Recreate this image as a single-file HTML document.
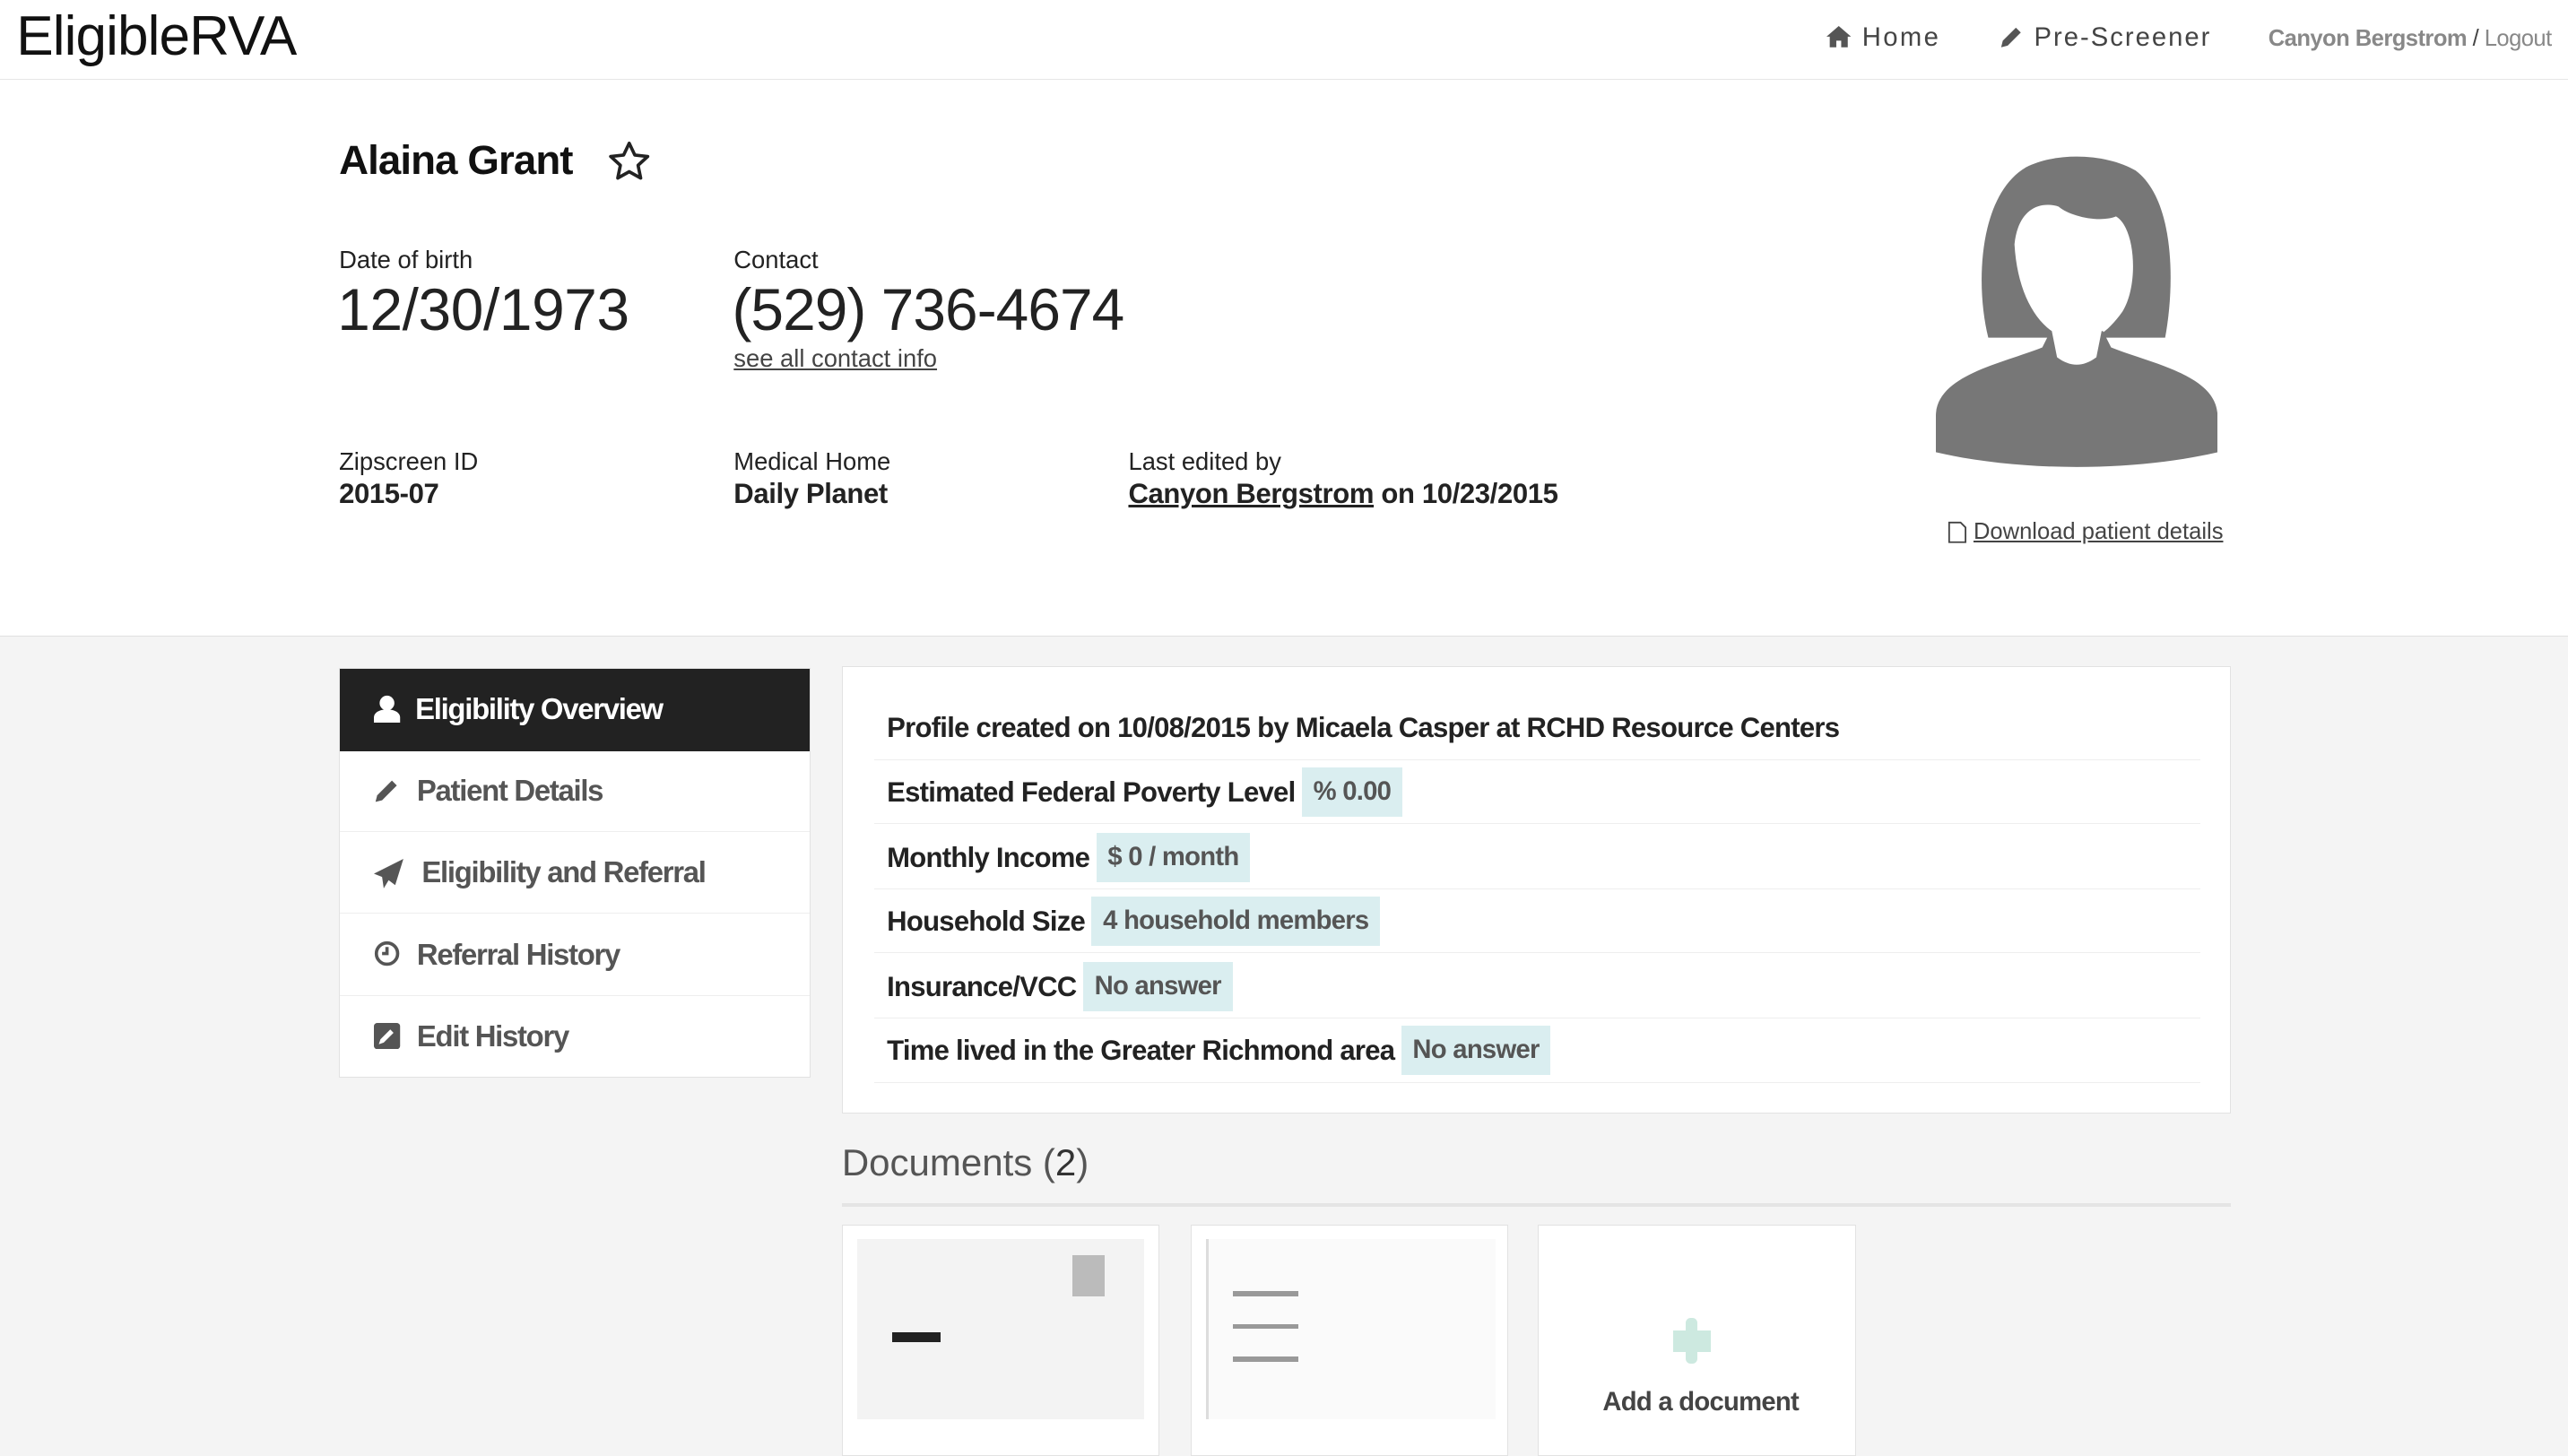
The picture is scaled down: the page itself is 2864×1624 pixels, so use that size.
<!DOCTYPE html>
<html><head><meta charset="utf-8"><style>
html,body{margin:0;padding:0;}
body{width:1568px;height:873px;overflow:hidden;zoom:1.82653;font-family:"Liberation Sans",sans-serif;background:#f4f4f4;color:#222;position:relative;}
.a{position:absolute;white-space:nowrap;}
#hdr{position:absolute;left:0;top:0;width:1568px;height:48px;background:#fff;border-bottom:1px solid #e6e6e6;}
#top{position:absolute;left:0;top:49px;width:1568px;height:339px;background:#fff;border-bottom:1px solid #e0e0e0;}
.lbl{font-size:15px;color:#222;}
.big{font-size:36px;color:#222;font-weight:300;letter-spacing:-0.2px;}
.bv{font-size:17px;font-weight:bold;color:#222;letter-spacing:-0.2px;}
#side{position:absolute;left:207px;top:408px;width:287px;height:249px;background:#fff;border:1px solid #e2e2e2;}
.si{position:absolute;left:0;width:287px;height:49px;border-bottom:1px solid #eee;font-size:18px;font-weight:bold;color:#555;letter-spacing:-0.7px;}
.si span{position:absolute;left:47px;top:14px;}
.si svg{position:absolute;left:21px;top:16px;}
#main{position:absolute;left:514px;top:407px;width:847px;height:272px;background:#fff;border:1px solid #e2e2e2;}
.row{position:absolute;left:19px;width:810px;height:39px;border-bottom:1px solid #eee;font-size:17px;font-weight:bold;color:#222;letter-spacing:-0.4px;}
.row .t{position:absolute;left:8px;top:10px;}
.bd{display:inline-block;background:#daeef0;color:#555;font-size:16px;padding:6px 7px;margin-left:4px;position:relative;top:-1px;letter-spacing:-0.4px;}
.card{position:absolute;top:748px;width:193px;height:140px;background:#fff;border:1px solid #e2e2e2;}
</style></head><body>
<div id="hdr">
 <div class="a" style="left:10px;top:3px;font-size:34px;color:#111;font-weight:300;letter-spacing:-0.5px">EligibleRVA</div>
 <svg class="a" style="left:1115px;top:16px" width="15" height="13" viewBox="0 0 15 13"><path d="M7.5 0L0 6.5h2V13h4V9h3v4h4V6.5h2z" fill="#555"/></svg>
 <div class="a" style="left:1137px;top:14px;font-size:16px;color:#444;letter-spacing:1.3px">Home</div>
 <svg class="a" style="left:1221px;top:16px" width="14" height="14" viewBox="0 0 14 14"><path d="M1 13l1-4 8-8 3 3-8 8z" fill="#555"/></svg>
 <div class="a" style="left:1242px;top:14px;font-size:16px;color:#444;letter-spacing:1.1px">Pre-Screener</div>
 <div class="a" style="left:1385px;top:16px;font-size:14px;color:#888;letter-spacing:-0.3px"><b>Canyon Bergstrom</b> <span style="color:#444">/</span> Logout</div>
</div>
<div id="top"></div>
<div class="a" style="left:207px;top:84px;font-size:25px;font-weight:bold;color:#111;letter-spacing:-0.5px">Alaina Grant</div>
<svg class="a" style="left:371px;top:86px" width="26" height="25" viewBox="0 0 26 25"><path d="M13 1.5l3.4 7.2 7.9.9-5.9 5.4 1.6 7.8L13 18.9l-7 3.9 1.6-7.8L1.7 9.6l7.9-.9z" fill="none" stroke="#222" stroke-width="2" stroke-linejoin="round"/></svg>
<div class="a lbl" style="left:207px;top:150px">Date of birth</div>
<div class="a big" style="left:206px;top:168px">12/30/1973</div>
<div class="a lbl" style="left:448px;top:150px">Contact</div>
<div class="a big" style="left:447px;top:168px;letter-spacing:-0.5px">(529) 736-4674</div>
<div class="a lbl" style="left:448px;top:210px;text-decoration:underline;color:#444">see all contact info</div>
<div class="a lbl" style="left:207px;top:273px">Zipscreen ID</div>
<div class="a bv" style="left:207px;top:292px">2015-07</div>
<div class="a lbl" style="left:448px;top:273px">Medical Home</div>
<div class="a bv" style="left:448px;top:292px">Daily Planet</div>
<div class="a lbl" style="left:689px;top:273px">Last edited by</div>
<div class="a bv" style="left:689px;top:292px"><u>Canyon Bergstrom</u> on 10/23/2015</div>
<svg class="a" style="left:1182px;top:94px" width="172" height="192" viewBox="0 0 172 192">
 <path d="M32 112 C24 80 26 25 55 8 C75 -2 105 0 122 10 C146 28 146 80 140 112 Z" fill="#777"/>
 <path d="M48 55 C50 35 62 28 75 32 C82 38 100 42 110 38 C122 45 124 80 114 96 C104 110 96 114 86 114 C66 112 50 90 48 55Z" fill="#fff"/>
 <path d="M0 160 C0 135 40 128 65 118 L70 108 L102 108 L107 118 C132 128 172 135 172 160 L172 182 C120 194 52 194 0 182Z" fill="#777"/>
 <path d="M70 104 L102 104 L98 124 C90 130 82 130 74 124Z" fill="#fff"/>
</svg>
<svg class="a" style="left:1189px;top:318px" width="12" height="14" viewBox="0 0 12 14"><path d="M1 1h7l3 3v9H1z" fill="none" stroke="#444"/></svg>
<div class="a" style="left:1205px;top:317px;font-size:14px;color:#444;text-decoration:underline">Download patient details</div>

<div id="side">
 <div class="si" style="top:0;background:#222;color:#fff;border-bottom:none;height:50px"><svg width="16" height="17" viewBox="0 0 16 17"><circle cx="8" cy="5" r="4.5" fill="#fff"/><path d="M0 17v-3c0-3 3-5 8-5s8 2 8 5v3z" fill="#fff"/></svg><span style="left:46px">Eligibility Overview</span></div>
 <div class="si" style="top:50px"><svg width="16" height="16" viewBox="0 0 16 16"><path d="M1 15l1-4 9-9 3 3-9 9z" fill="#555"/></svg><span>Patient Details</span></div>
 <div class="si" style="top:100px"><svg width="18" height="18" viewBox="0 0 18 18"><path d="M18 0L0 9l5 2 1 7 3-5 4 3z" fill="#555"/></svg><span style="left:50px">Eligibility and Referral</span></div>
 <div class="si" style="top:150px"><svg width="16" height="16" viewBox="0 0 16 16"><circle cx="8" cy="8" r="6.5" fill="none" stroke="#555" stroke-width="2"/><path d="M8 4v4H5" fill="none" stroke="#555" stroke-width="2"/></svg><span>Referral History</span></div>
 <div class="si" style="top:200px;border-bottom:none"><svg width="16" height="16" viewBox="0 0 16 16"><rect width="16" height="16" rx="2" fill="#555"/><path d="M3 13l1-3 6-6 2 2-6 6z" fill="#fff"/></svg><span>Edit History</span></div>
</div>

<div id="main">
 <div class="row" style="top:17px"><span class="t">Profile created on 10/08/2015 by Micaela Casper at RCHD Resource Centers</span></div>
 <div class="row" style="top:56px"><span class="t" style="top:6px">Estimated Federal Poverty Level<span class="bd">% 0.00</span></span></div>
 <div class="row" style="top:96px"><span class="t" style="top:6px">Monthly Income<span class="bd">$ 0 / month</span></span></div>
 <div class="row" style="top:135px"><span class="t" style="top:6px">Household Size<span class="bd">4 household members</span></span></div>
 <div class="row" style="top:175px"><span class="t" style="top:6px">Insurance/VCC<span class="bd">No answer</span></span></div>
 <div class="row" style="top:214px"><span class="t" style="top:6px">Time lived in the Greater Richmond area<span class="bd">No answer</span></span></div>
</div>

<div class="a" style="left:514px;top:697px;font-size:23px;color:#555;font-weight:300">Documents (<b style="color:#333">2</b>)</div>
<div class="a" style="left:514px;top:735px;width:848px;height:2px;background:#e4e4e4"></div>
<div class="card" style="left:514px">
 <div class="a" style="left:9px;top:8px;width:175px;height:110px;background:#f3f3f3"></div>
 <div class="a" style="left:30px;top:65px;width:30px;height:6px;background:#222"></div>
 <div class="a" style="left:140px;top:18px;width:20px;height:25px;background:#bbb"></div>
</div>
<div class="card" style="left:727px">
 <div class="a" style="left:9px;top:8px;width:175px;height:110px;background:#fafafa;border-left:2px solid #ddd"></div>
 <div class="a" style="left:25px;top:40px;width:40px;height:3px;background:#999"></div>
 <div class="a" style="left:25px;top:60px;width:40px;height:3px;background:#999"></div>
 <div class="a" style="left:25px;top:80px;width:40px;height:3px;background:#999"></div>
</div>
<div class="card" style="left:939px">
 <div class="a" style="left:90px;top:56px;width:7px;height:28px;background:#cde9e0;border-radius:3px"></div>
 <div class="a" style="left:82px;top:64px;width:23px;height:13px;background:#cde9e0"></div>
 <div class="a" style="left:39px;top:99px;font-size:16px;font-weight:bold;color:#444;letter-spacing:-0.4px">Add a document</div>
</div>
</body></html>
